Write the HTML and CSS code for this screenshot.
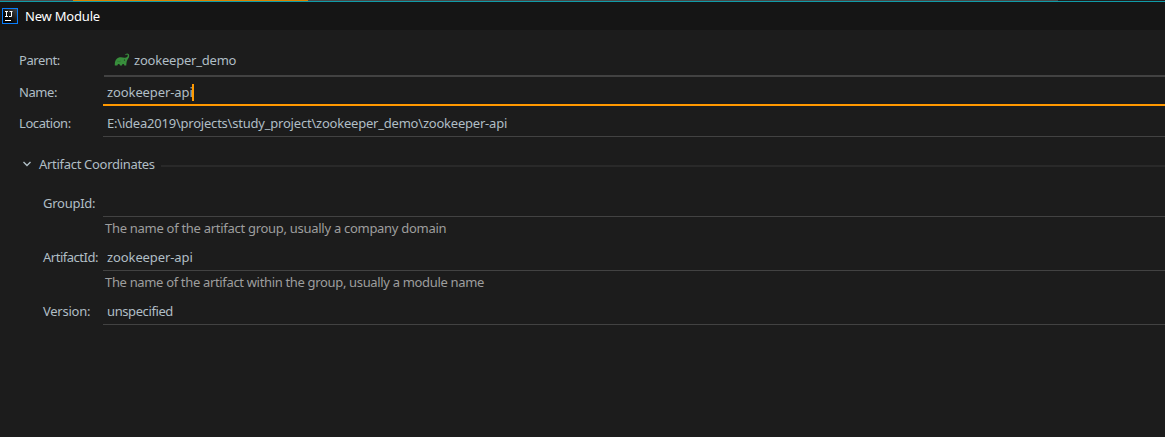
FILE: index.html
```
<!DOCTYPE html>
<html lang="en">
<head>
<meta charset="utf-8">
<title>New Module</title>
<link rel="stylesheet" href="styles.css">
</head>
<body>
<div class="backdrop"><span class="backdrop-left"></span><span class="backdrop-accent"></span><span class="backdrop-mid"></span></div>
<header class="titlebar">
  <svg class="app-icon" width="16" height="16" viewBox="0 0 16 16">
    <defs><linearGradient id="g" x1="0" y1="1" x2="1" y2="0"><stop offset=".35" stop-color="#050505"/><stop offset="1" stop-color="#484848"/></linearGradient></defs>
    <rect x=".5" y=".5" width="15" height="15" fill="url(#g)" stroke="#087cfa"/>
    <path d="M3 3.500h3M4.500 3v5M3 8.500h3M7.500 3.500h3M9.500 3v5.500H7M3 12.500h6" fill="none" stroke="#fff"/>
  </svg>
  <span class="title">New Module</span>
</header>
<main class="form">
  <div class="row parent">
    <label>Parent:</label>
    <div class="field combo">
      <svg class="gradle" width="16" height="14" viewBox="0 0 16 14">
        <path d="M.8 12.500C.500 8.500 1.800 5.300 4.800 4.500c2.300-.6 4.300 0 5.700.2 1.900.2 3.300-.7 3.300-2.200 0-1-1.200-1.300-2-.3-.6-.2-.6-.8-.1-1.200C13.200-.3 15.200.7 15.200 2.700c0 2-1.500 3.300-2.200 5-.5 1.300-.7 2.800-.7 4.800h-2c0-2-2.200-2-2.400 0H6c-.2-2-2.400-2-2.600 0Z" fill="#388e3c"/>
        <path d="M3 8c1.500.8 2.800.7 4-.1" fill="none" stroke="#2c752f" stroke-width=".7"/><circle cx="10.500" cy="7" r=".6" fill="#1c1c1c"/>
      </svg>
      <span class="text demo">zookeeper_demo</span>
    </div>
  </div>
  <div class="row name"><label>Name:</label><div class="field"><span class="text api">zookeeper-api</span><i class="caret"></i></div></div>
  <div class="row location"><label>Location:</label><div class="field"><span class="text path">E:\idea2019\projects\study_project\zookeeper_demo\zookeeper-api</span></div></div>
  <div class="section">
    <svg width="8" height="6" viewBox="0 0 8 6"><path d="M.5 1 4 4.500 7.500 1" fill="none" stroke="#b0bec5" stroke-width="1.400"/></svg>
    <span class="heading">Artifact Coordinates</span><i class="rule"></i>
  </div>
  <div class="row sub"><label>GroupId:</label><div class="field"></div></div>
  <p class="hint"><span class="hint-group">The name of the artifact group, usually a company domain</span></p>
  <div class="row sub"><label class="tight">ArtifactId:</label><div class="field"><span class="text api">zookeeper-api</span></div></div>
  <p class="hint"><span class="hint-artifact">The name of the artifact within the group, usually a module name</span></p>
  <div class="row sub"><label>Version:</label><div class="field"><span class="text version">unspecified</span></div></div>
</main>
</body>
</html>
```
FILE: styles.css
```
* { box-sizing: border-box; }
body {
  margin: 0;
  height: 437px;
  overflow: hidden;
  background: #1c1c1c;
  color: #b0bec5;
  font: 13px/16px "Noto Sans", sans-serif;
  white-space: nowrap;
}
.backdrop { display: flex; height: 1px; background: #202020; }
.backdrop-left { width: 73px; background: #4b4b4b; }
.backdrop-accent { width: 235px; background: #d98200; }
.backdrop-mid { width: 750px; background: #484848; }
.titlebar {
  display: flex;
  height: 29px;
  padding: 6px 0 0 2px;
  border-top: 1px solid #0f9ba8;
  background: #151515;
  color: #fff;
}
.app-icon { flex: none; margin-right: 7px; }
.title { line-height: 16px; letter-spacing: -.2px; }
.form { display: flex; flex-direction: column; padding-top: 16px; }
.row { display: flex; flex: none; padding-left: 19px; }
.row label { flex: none; width: 84px; letter-spacing: -.43px; }
.field {
  display: flex;
  flex: 1;
  padding-left: 4px;
  border-bottom: 1px solid #424242;
}
.demo, .path { letter-spacing: -.215px; }
.api { letter-spacing: -.1px; }
.version { letter-spacing: -.4px; }
.parent { height: 31px; padding-top: 6px; }
.combo { margin-left: 1px; padding-left: 10px; border-bottom-width: 2px; }
.gradle { margin: 1px 4px 0 0; }
.name { height: 29px; padding-top: 7px; }
.name .field { border-bottom: 2px solid #ff9800; }
.caret { width: 2px; height: 17px; margin-left: -1px; background: #ff9800; }
.location { height: 31px; padding-top: 9px; }
.section { display: flex; height: 55px; padding: 19px 0 0 23px; }
.section svg { margin: 5px 8px 0 0; }
.heading { width: 116px; letter-spacing: -.3px; }
.rule { flex: 1; height: 2px; margin: 9px 0 0 6px; background: #292929; }
.sub { height: 25px; padding: 3px 0 0 43px; }
.sub label { width: 60px; letter-spacing: -.25px; }
.sub .tight { letter-spacing: -.48px; }
.hint { height: 29px; margin: 0; padding: 3px 0 0 105px; color: #9e9e9e; }
.hint-group { letter-spacing: -.285px; }
.hint-artifact { letter-spacing: -.335px; }
```
